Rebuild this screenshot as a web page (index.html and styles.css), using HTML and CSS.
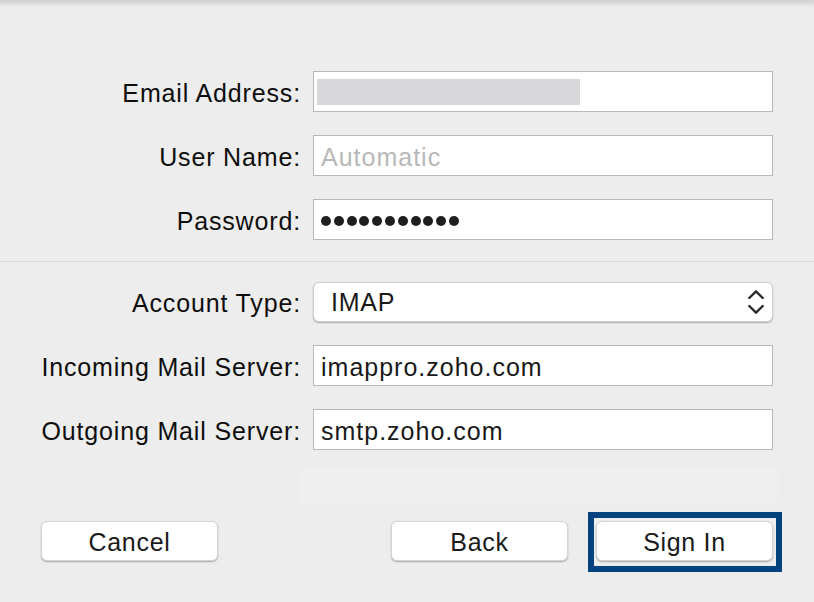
FILE: index.html
```html
<!DOCTYPE html>
<html lang="en">
<head>
<meta charset="utf-8">
<title>Mail Account</title>
<link rel="stylesheet" href="styles.css">
</head>
<body>
<div class="window">
  <section class="fields fields-top">
    <label class="label">Email Address:</label>
    <div class="field"><span class="redacted"></span></div>

    <label class="label">User Name:</label>
    <div class="field"><span class="placeholder">Automatic</span></div>

    <label class="label">Password:</label>
    <div class="field">
      <span class="dots">
        <i></i><i></i><i></i><i></i><i></i><i></i><i></i><i></i><i></i><i></i><i></i>
      </span>
    </div>
  </section>

  <div class="divider"></div>

  <section class="fields fields-bottom">
    <label class="label">Account Type:</label>
    <div class="select">
      <span class="select-value">IMAP</span>
      <svg class="chevrons" width="18" height="28" viewBox="0 0 18 28">
        <path d="M2.3 10 L9 3.3 L15.7 10" fill="none" stroke="#2a2a2a" stroke-width="2.4" stroke-linecap="round" stroke-linejoin="round"/>
        <path d="M2.3 18 L9 24.7 L15.7 18" fill="none" stroke="#2a2a2a" stroke-width="2.4" stroke-linecap="round" stroke-linejoin="round"/>
      </svg>
    </div>

    <label class="label">Incoming Mail Server:</label>
    <div class="field"><span class="value">imappro.zoho.com</span></div>

    <label class="label">Outgoing Mail Server:</label>
    <div class="field"><span class="value">smtp.zoho.com</span></div>
  </section>

  <div class="faint"></div>

  <div class="buttons">
    <button class="btn">Cancel</button>
    <div class="btn-group">
      <button class="btn">Back</button>
      <div class="highlight">
        <button class="btn">Sign In</button>
      </div>
    </div>
  </div>
</div>
</body>
</html>
```

FILE: styles.css
```css
* { box-sizing: border-box; }

html, body {
  margin: 0;
  padding: 0;
  width: 814px;
  height: 602px;
  overflow: hidden;
}

body {
  background: #ededed;
  font-family: "Liberation Sans", Arial, Helvetica, sans-serif;
  color: #141414;
}

.window {
  width: 814px;
  height: 602px;
  background: linear-gradient(to bottom, #cfcfcf 0px, #dcdcdc 3px, #e8e8e8 6px, #ededed 8px);
}

.fields {
  display: grid;
  grid-template-columns: 301px 460px;
  column-gap: 12px;
  row-gap: 23px;
  align-items: center;
}

.fields-top {
  padding-top: 71px;
  grid-auto-rows: 41px;
}

.fields-bottom {
  margin-top: 20px;
  grid-template-rows: 40px 41px 41px;
}

.label {
  text-align: right;
  font-size: 25px;
  letter-spacing: 0.85px;
  padding-top: 3px;
  white-space: nowrap;
  color: #0e0e0e;
}

.field {
  height: 41px;
  background: #fff;
  border: 1px solid #b9b9b9;
  display: flex;
  align-items: center;
  padding: 0 7px;
  font-size: 25px;
  letter-spacing: 1px;
  color: #1a1a1a;
}

.value, .placeholder {
  padding-top: 3px;
}

.placeholder {
  color: #b8b8b8;
}

.redacted {
  display: block;
  width: 263px;
  height: 26px;
  margin-left: -4px;
  background: #d8d8da;
}

.dots {
  display: flex;
  gap: 2.8px;
  padding-top: 2px;
}

.dots i {
  display: block;
  width: 10px;
  height: 10px;
  border-radius: 50%;
  background: #1f1f1f;
}

.divider {
  margin-top: 21px;
  height: 1px;
  background: #d6d6d6;
}

.select {
  height: 40px;
  background: #fff;
  border: 1px solid #cfcfcf;
  border-radius: 6px;
  box-shadow: 0 1px 1.5px rgba(0, 0, 0, 0.28);
  display: flex;
  align-items: center;
  justify-content: space-between;
  padding: 0 7px 0 17px;
  font-size: 25px;
  letter-spacing: 0.8px;
  color: #1a1a1a;
}

.select-value {
  padding-top: 1px;
}

.chevrons {
  display: block;
}

.faint {
  margin: 18px 0 0 300px;
  width: 478px;
  height: 34px;
  background: #efeff0;
}

.buttons {
  margin-top: 19px;
  padding: 0 41px;
  display: flex;
  justify-content: space-between;
  align-items: flex-start;
}

.btn-group {
  display: flex;
  gap: 28px;
  align-items: flex-start;
}

.btn {
  display: block;
  width: 177px;
  height: 40px;
  background: #fff;
  border: 1px solid #d4d4d4;
  border-radius: 6px;
  box-shadow: 0 1px 1.5px rgba(0, 0, 0, 0.3);
  font-family: "Liberation Sans", Arial, Helvetica, sans-serif;
  font-size: 25px;
  letter-spacing: 0.7px;
  color: #1a1a1a;
  padding: 2px 0 0;
  margin: 0;
}

.highlight {
  border: 6px solid #02427f;
  padding: 3px 3px 5px 2px;
  margin: -9px -9px -11px -8px;
}
```
